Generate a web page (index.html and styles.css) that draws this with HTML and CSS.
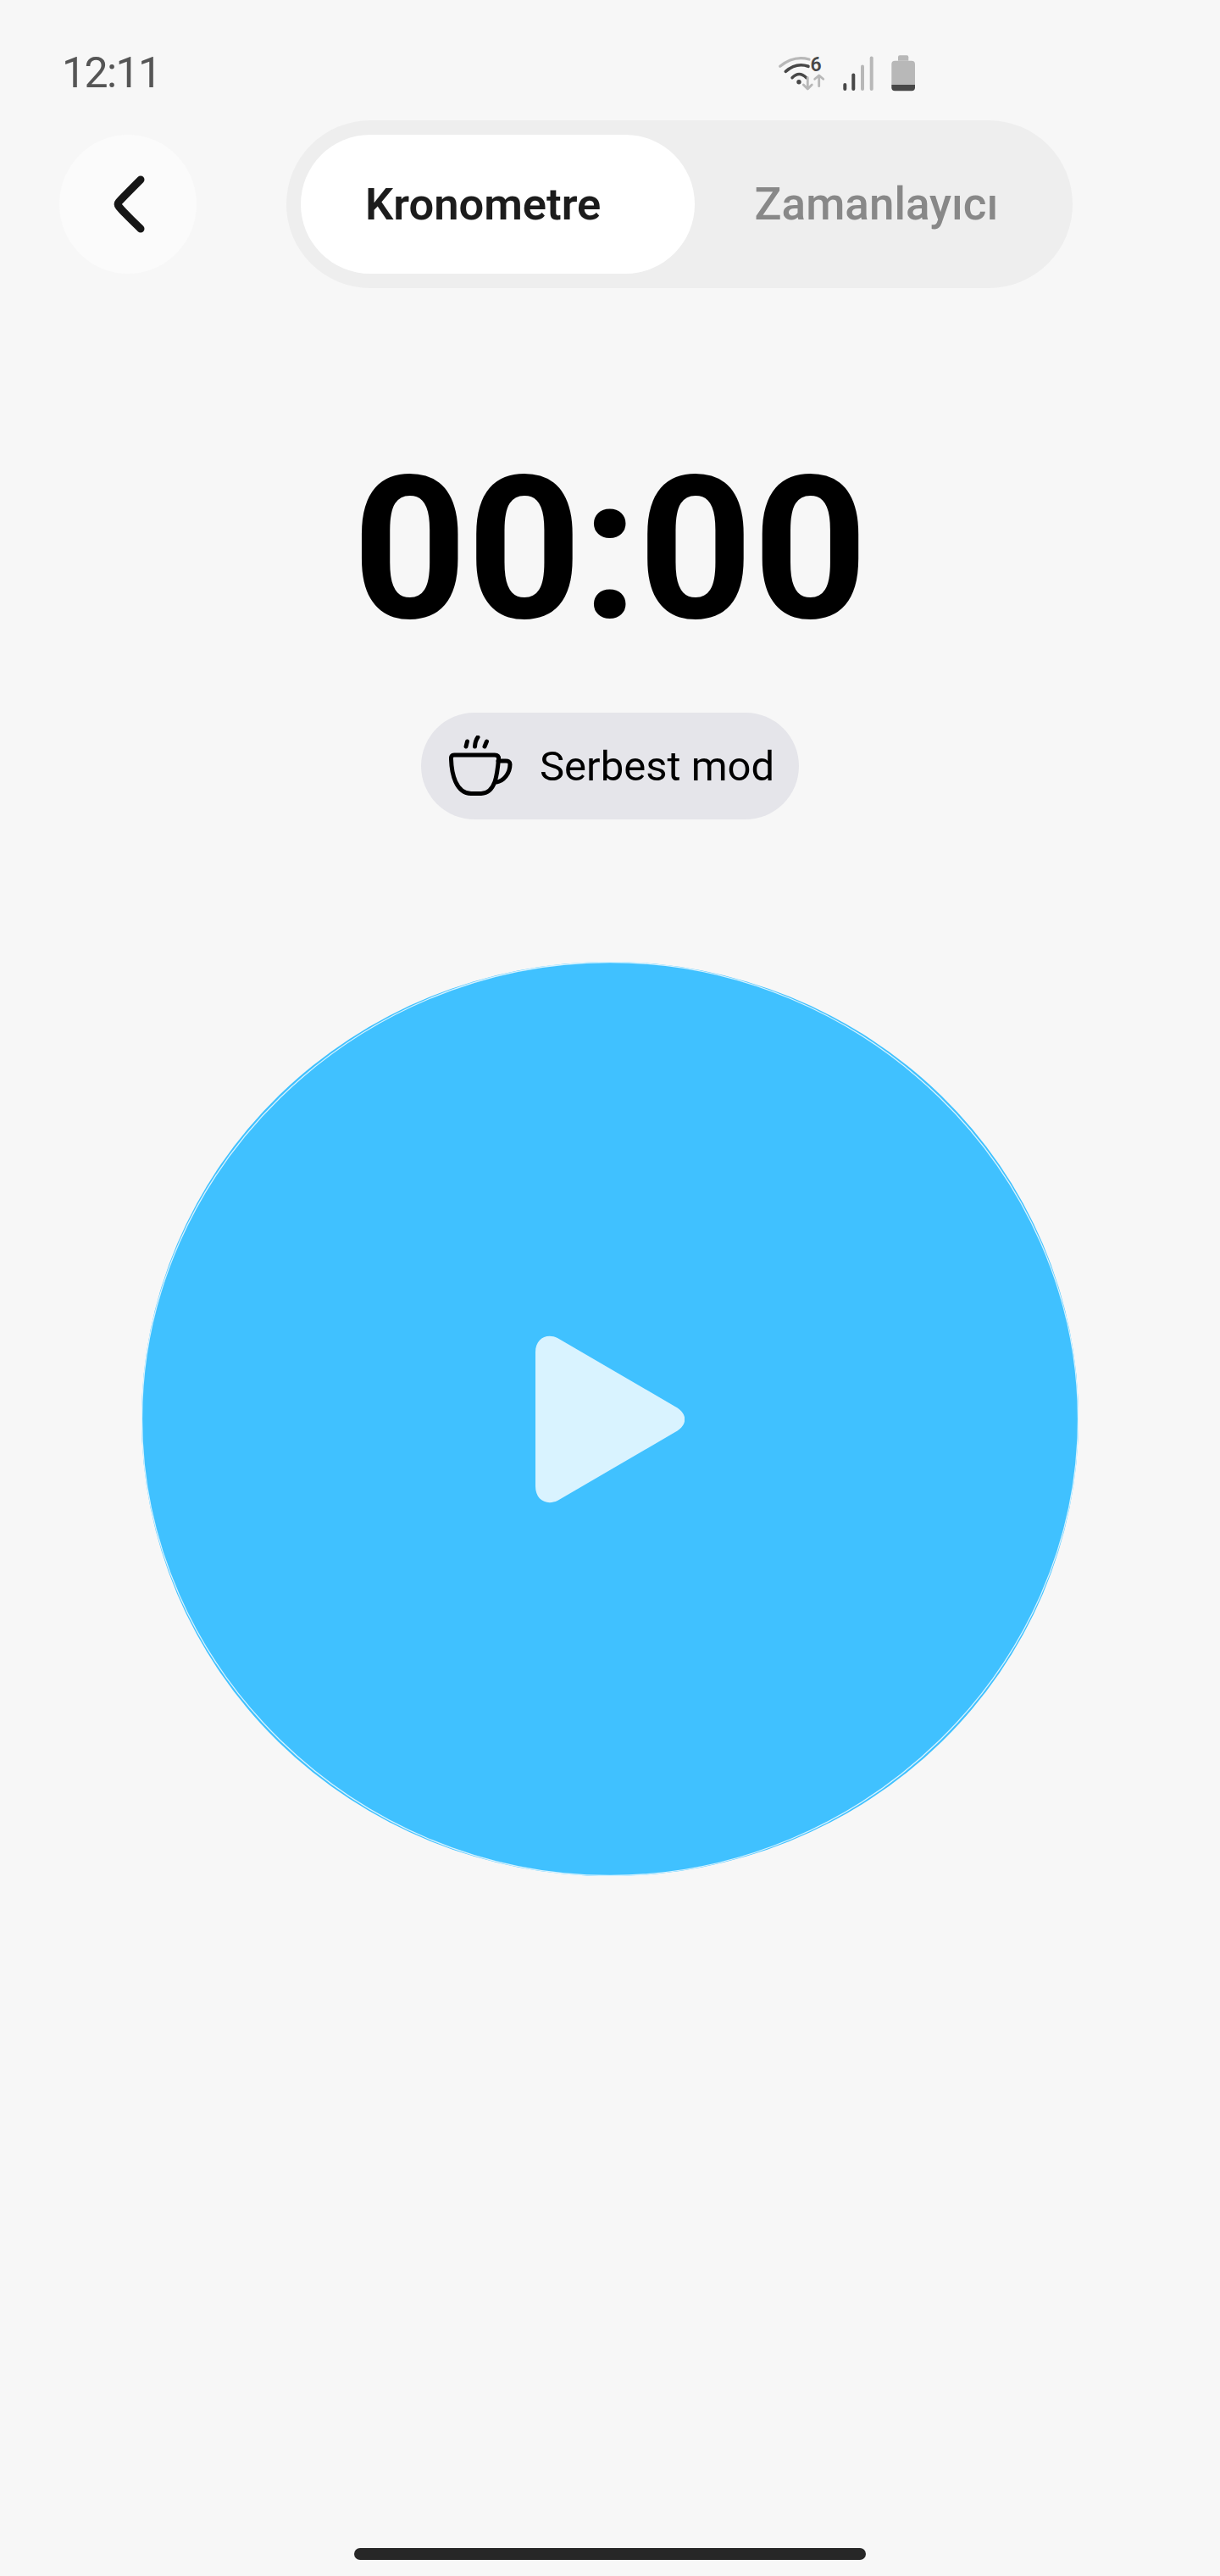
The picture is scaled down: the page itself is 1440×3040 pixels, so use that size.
FILE: index.html
```html
<!DOCTYPE html>
<html lang="tr">

<head>
    <meta charset="UTF-8">
    <meta name="viewport" content="width=device-width, initial-scale=1.0">
    <title>Kronometre</title>
    <link rel="stylesheet" href="styles.css">
</head>

<body>
    <div class="screen">
        <div class="status">
            <span class="status__time">12:11</span>
            <svg class="status__icons" width="170" height="50" viewBox="0 0 170 50" fill="none" stroke-linecap="round" stroke-linejoin="round">
                <path d="M5.7 18.3Q21.7 5 40 10" stroke="#b8b8b8" stroke-width="3.200" />
                <path d="M12.3 24.3Q25 13.3 39 18.3" stroke="#484848" stroke-width="3.600" />
                <path d="M20 31.7Q28.3 23.3 36.7 31.7" stroke="#484848" stroke-width="3.400" />
                <circle cx="28" cy="36.7" r="2.700" fill="#484848" />
                <text class="status__six" x="41.500" y="24">6</text>
                <path d="M38.3 31.7V45M33.3 40L38.3 45L43.3 40" stroke="#b8b8b8" stroke-width="2.800" />
                <path d="M51.7 41.7V29.3M46.7 33.3L51.7 29L56.7 33.3" stroke="#b8b8b8" stroke-width="2.800" />
                <rect x="80.3" y="38" width="4" height="9" rx="2" fill="#484848" />
                <rect x="90.3" y="26.5" width="4" height="20.5" rx="2" fill="#484848" />
                <rect x="101" y="16.5" width="4" height="30.5" rx="2" fill="#b8b8b8" />
                <rect x="111.7" y="6.5" width="4" height="40.5" rx="2" fill="#b8b8b8" />
                <path d="M145 11.7V7.3Q145 5.3 147 5.3H155.3Q157.3 5.3 157.3 7.3V11.7Z" fill="#b8b8b8" />
                <path d="M137.3 40V15.7Q137.3 11.7 141.3 11.7H161Q165 11.7 165 15.7V40Z" fill="#b8b8b8" />
                <path d="M137.3 40H165V43.3Q165 47.3 161 47.3H141.3Q137.3 47.3 137.3 43.3Z" fill="#484848" />
            </svg>
        </div>

        <div class="header">
            <button class="back">
                <svg class="back__icon" width="40" height="68" viewBox="0 0 40 68" fill="none">
                    <path d="M33 5C24 14 14 24 7.5 31Q5 34 7.5 37C14 45 24 54 33 63" stroke="#161616" stroke-width="9" stroke-linecap="round" />
                </svg>
            </button>
            <div class="tabs">
                <div class="tabs__item tabs__item--active">Kronometre</div>
                <div class="tabs__item">Zamanlayıcı</div>
            </div>
        </div>

        <div class="timer">00:00</div>

        <div class="mode">
            <svg class="mode__icon" width="75" height="72" viewBox="0 0 75 72" fill="none" stroke="#000" stroke-width="5" stroke-linecap="round" stroke-linejoin="round">
                <path d="M6 23H54Q59 23 58.5 28C57 45 55 68 38 68.5H26C8 68 3 45 2.5 28Q2 23 6 23Z" />
                <path d="M58 30H66Q72 29.500 72 34C72 45 64 54 56 55" />
                <path d="M20 13L21.500 7M30.500 13Q31 6 34 2M42 13L44.500 7" />
            </svg>
            <span>Serbest mod</span>
        </div>

        <button class="start">
            <svg class="start__shape" width="1106" height="1079" viewBox="0 0 1106 1079">
                <ellipse cx="553" cy="539.500" rx="553" ry="539.500" fill="#40c1ff" />
                <path d="M553 .5C853.600 .5 1105.500 246.300 1105.500 539.500C1105.500 832.700 853.600 1078.500 553 1078.500C252.400 1078.500 .5 832.700 .5 539.500C.5 246.300 252.400 .5 553 .5Z" fill="none" stroke="#d5f2ff" stroke-width="1.300" />
            </svg>
            <svg class="start__play" width="176" height="198" viewBox="0 0 176 198">
                <path d="M0 20C0 4 13-3 26 3L165 84C180 92 180 106 165 114L26 195C13 201 0 194 0 178Z" fill="#d9f3ff" />
            </svg>
        </button>

        <div class="home-bar"></div>
    </div>
</body>

</html>
```

FILE: styles.css
```css
body {
    font-family: Roboto, "Liberation Sans", sans-serif;
    margin: 0;
    background: #f7f7f7;
}

*,
::after,
::before {
    box-sizing: border-box;
}

button {
    padding: 0;
    border: 0;
    background: none;
}

.screen {
    display: flex;
    flex-direction: column;
    align-items: center;
    width: 1440px;
    height: 3040px;
    overflow: hidden;
}

.status {
    display: flex;
    justify-content: space-between;
    width: 100%;
    height: 142px;
    padding: 60px 355px 0 73px;
}

.status__time {
    font-size: 50px;
    line-height: 52px;
    letter-spacing: -1.6px;
    color: #555;
}

.status__six {
    font-family: Roboto, sans-serif;
    font-size: 23px;
    font-weight: 600;
    fill: #484848;
}

.header {
    display: flex;
    align-items: center;
    gap: 106px;
    width: 100%;
    padding-left: 70px;
}

.back {
    display: flex;
    align-items: center;
    justify-content: center;
    width: 162px;
    height: 164px;
    border-radius: 50%;
    background: #fbfbfb;
}

.back__icon {
    margin-left: 3px;
}

.tabs {
    display: flex;
    width: 928px;
    height: 198px;
    padding: 17px;
    border-radius: 99px;
    background: #eee;
}

.tabs__item {
    display: flex;
    flex: 1;
    align-items: center;
    justify-content: center;
    font-size: 53px;
    font-weight: 500;
    color: #888;
}

.tabs__item--active {
    flex: 0 0 465px;
    justify-content: flex-start;
    padding-left: 76px;
    border-radius: 82px;
    background: #fff;
    font-size: 52.5px;
    font-weight: 600;
    color: #1c1c1c;
}

.timer {
    margin-top: 191px;
    font-size: 236px;
    font-weight: 700;
    line-height: 236px;
    color: #000;
}

.mode {
    display: flex;
    align-items: center;
    gap: 32px;
    width: 446px;
    height: 126px;
    margin-top: 74px;
    padding-left: 33px;
    border-radius: 63px;
    background: #e5e5ea;
    font-size: 49px;
    color: #000;
}

.start {
    position: relative;
    display: flex;
    align-items: center;
    justify-content: center;
    width: 1106px;
    height: 1079px;
    margin-top: 168px;
}

.start__shape {
    position: absolute;
    top: 0;
    left: 0;
}

.start__play {
    position: relative;
}

.home-bar {
    width: 604px;
    height: 14px;
    margin-top: auto;
    margin-bottom: 19px;
    border-radius: 7px;
    background: #272727;
}
```
